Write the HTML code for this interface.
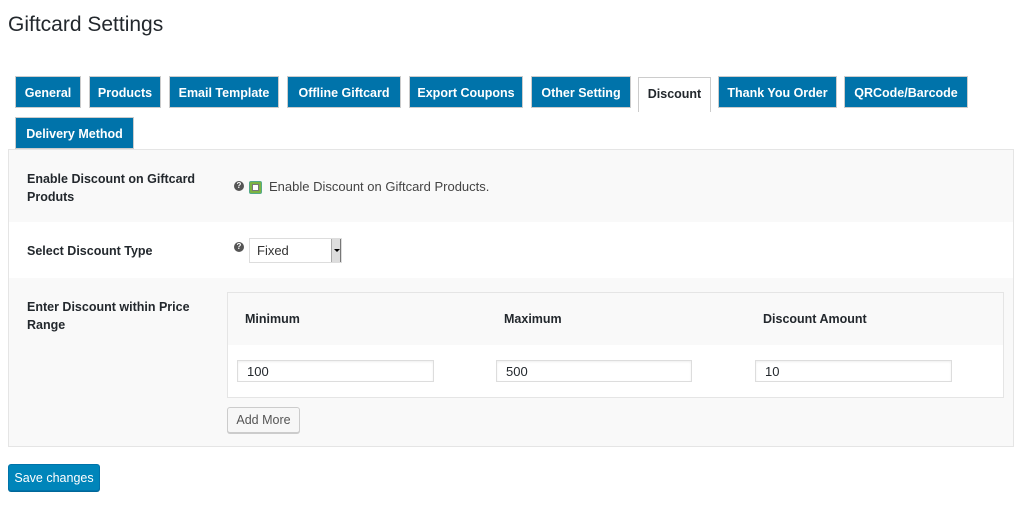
<!DOCTYPE html>
<html><head><style>
*{box-sizing:border-box;margin:0;padding:0}
body{width:1024px;height:510px;background:#fff;font-family:"Liberation Sans",sans-serif;color:#23282d;position:relative;overflow:hidden}
.a{position:absolute}
h1{position:absolute;left:8px;top:13px;font-size:21px;font-weight:normal;color:#23282d}
.tab{position:absolute;height:32px;background:#0073aa;border:1px solid #ccc;color:#fff;font-weight:bold;font-size:12.5px;text-align:center;line-height:33px;white-space:nowrap}
.tab.on{background:#fff;color:#23282d;height:35px;border-bottom:none}
.lbl{position:absolute;font-weight:bold;font-size:12.5px;line-height:18px;left:27px}
.inp{position:absolute;height:22px;background:#fff;border:1px solid #ddd;font-size:13px;padding-left:9px;line-height:21px;box-shadow:inset 0 1px 2px rgba(0,0,0,.07)}
.q{position:absolute;width:10px;height:10px;border-radius:50%;background:#555;color:#fff;font-size:8px;font-weight:bold;text-align:center;line-height:10px}
</style></head><body>
<h1>Giftcard Settings</h1>
<div class="tab" style="left:15px;top:76px;width:66px">General</div>
<div class="tab" style="left:89px;top:76px;width:72px">Products</div>
<div class="tab" style="left:169px;top:76px;width:110px">Email Template</div>
<div class="tab" style="left:287px;top:76px;width:114px">Offline Giftcard</div>
<div class="tab" style="left:409px;top:76px;width:114px">Export Coupons</div>
<div class="tab" style="left:531px;top:76px;width:100px">Other Setting</div>
<div class="tab" style="left:718px;top:76px;width:119px">Thank You Order</div>
<div class="tab" style="left:844px;top:76px;width:124px">QRCode/Barcode</div>
<div class="tab" style="left:15px;top:117px;width:119px">Delivery Method</div>
<div class="a" style="left:8px;top:149px;width:1006px;height:298px;background:#f9f9f9;border:1px solid #e5e5e5"></div>
<div class="tab on" style="left:638px;top:77px;width:73px;line-height:32px">Discount</div>
<div class="a" style="left:9px;top:222px;width:1004px;height:56px;background:#fff"></div>
<div class="lbl" style="top:170px">Enable Discount on Giftcard<br>Produts</div>
<div class="q" style="left:234px;top:181px">?</div>
<div class="a" style="left:249px;top:181px;width:13px;height:13px;background:#7cb342;border:1px solid #5a8;border-radius:2px;"><div style="margin:2px;width:7px;height:7px;background:#fff;border:1px solid #777"></div></div>
<div class="a" style="left:269px;top:179px;font-size:13px;color:#444">Enable Discount on Giftcard Products.</div>
<div class="lbl" style="top:242px">Select Discount Type</div>
<div class="q" style="left:234px;top:242px">?</div>
<div class="a" style="left:249px;top:238px;width:93px;height:25px;background:#fff;border:1px solid #ddd;font-size:13px;padding:4px 0 0 7px;color:#333">Fixed
<div style="position:absolute;right:0;top:0;width:10px;height:23px;background:#ddd;border-left:1px solid #aaa;border-right:1px solid #777"><div style="margin:10px 0 0 2px;border:3px solid transparent;border-top:3px solid #000;width:0"></div></div></div>
<div class="lbl" style="top:298px">Enter Discount within Price<br>Range</div>
<div class="a" style="left:227px;top:292px;width:777px;height:106px;border:1px solid #e5e5e5;background:#fff"></div>
<div class="a" style="left:228px;top:293px;width:775px;height:52px;background:#f9f9f9"></div>
<div class="a" style="left:245px;top:312px;font-weight:bold;font-size:12.5px">Minimum</div>
<div class="a" style="left:504px;top:312px;font-weight:bold;font-size:12.5px">Maximum</div>
<div class="a" style="left:763px;top:312px;font-weight:bold;font-size:12.5px">Discount Amount</div>
<div class="inp" style="left:237px;top:360px;width:197px">100</div>
<div class="inp" style="left:496px;top:360px;width:196px">500</div>
<div class="inp" style="left:755px;top:360px;width:197px">10</div>
<div class="a" style="left:227px;top:407px;width:73px;height:26px;background:#f7f7f7;border:1px solid #ccc;border-radius:3px;font-size:12.5px;color:#555;text-align:center;line-height:24px;box-shadow:0 1px 0 #ccc">Add More</div>
<div class="a" style="left:8px;top:464px;width:92px;height:27px;background:#0085ba;border:1px solid #0073aa;border-radius:3px;font-size:12.5px;color:#fff;text-align:center;line-height:26px;box-shadow:0 1px 0 #006799">Save changes</div>
</body></html>
